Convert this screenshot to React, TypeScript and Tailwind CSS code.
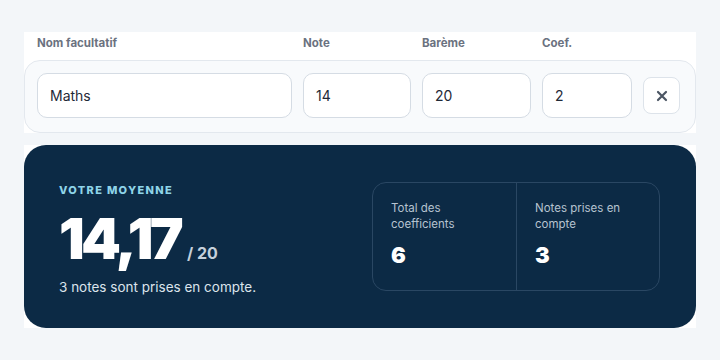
export default function App() {
  const font = { fontFamily: "Inter, 'Noto Sans', sans-serif" }

  return (
    <div className="min-h-screen bg-[#f3f6f9] px-6 pt-8" style={font}>
      <div className="bg-white">
        <div className="grid h-7 grid-cols-[255px_108px_109px_90px_37px] gap-[11px] px-[13px] pt-[3px] text-[11.5px] font-bold text-[#6b7280]">
          <span>Nom facultatif</span>
          <span>Note</span>
          <span>Barème</span>
          <span>Coef.</span>
          <span />
        </div>
        <div className="grid grid-cols-[255px_108px_109px_90px_37px] items-center gap-[11px] rounded-2xl border border-[#e3e8ee] bg-[#f8fafc] px-[12px] pb-[14px] pt-[12px]">
          <Field value="Maths" />
          <Field value="14" />
          <Field value="20" />
          <Field value="2" />
          <button className="flex h-[37px] w-[37px] items-center justify-center rounded-lg border border-[#dde3ea] bg-white text-[#4b5563]">
            <svg width="12" height="12" viewBox="0 0 12 12" fill="none" stroke="currentColor" strokeWidth="2.2" strokeLinecap="round">
              <path d="M2 2l8 8M10 2l-8 8" />
            </svg>
          </button>
        </div>
      </div>

      <div className="mt-3 bg-white">
        <div className="flex h-[183px] items-center justify-between rounded-[22px] bg-[#0c2a45] pl-[35px] pr-[36px]">
          <div className="pt-[6px]">
            <div className="text-[11px] font-extrabold tracking-[0.12em] text-[#8fd4e8]">VOTRE MOYENNE</div>
            <div className="mt-[12px] flex items-end">
              <span className="text-[57px] font-black leading-none tracking-[-0.065em] text-white">14,17</span>
              <span className="mb-[6px] ml-[7px] text-[16px] font-bold leading-none text-[#c5d0db]">/ 20</span>
            </div>
            <div className="mt-[10px] text-[13.5px] text-[#dce4ec]">3 notes sont prises en compte.</div>
          </div>
          <div className="grid h-[109px] w-[288px] grid-cols-2 rounded-[14px] border border-[#2a4763]">
            <Stat label="Total des coefficients" value="6" />
            <div className="border-l border-[#2a4763]">
              <Stat label="Notes prises en compte" value="3" />
            </div>
          </div>
        </div>
      </div>
    </div>
  )
}

function Field({ value }: { value: string }) {
  return (
    <div className="flex h-[45px] items-center rounded-[10px] border border-[#d5dce4] bg-white px-[12px] text-[14px] text-[#1f2937]">
      {value}
    </div>
  )
}

function Stat({ label, value }: { label: string; value: string }) {
  return (
    <div className="px-[18px] pt-[17px]">
      <div className="w-[100px] text-[11.5px] leading-4 text-[#b6c3d0]">{label}</div>
      <div className="mt-[12px] text-[22px] font-black leading-none text-white">{value}</div>
    </div>
  )
}
